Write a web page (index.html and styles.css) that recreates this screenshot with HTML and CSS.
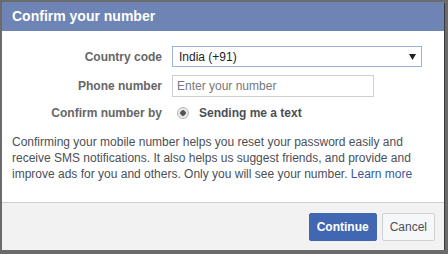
FILE: index.html
```html
<!DOCTYPE html>
<html lang="en">
<head>
  <meta charset="UTF-8" />
  <title>Confirm your number</title>
  <link rel="stylesheet" href="styles.css">
</head>
<body>
  <div class="dialog">
    <div class="dialog-header">Confirm your number</div>

    <div class="dialog-body">
      <div class="form-grid">
        <label for="country">Country code</label>
        <div class="select-wrap">
          <select id="country">
            <option>India (+91)</option>
          </select>
          <svg class="select-arrow" width="7" height="6" viewBox="0 0 7 6"><path d="M0 0 H7 L3.5 6 Z" fill="#1d2129"/></svg>
        </div>

        <label for="phone">Phone number</label>
        <input type="text" id="phone" placeholder="Enter your number">

        <label>Confirm number by</label>
        <div class="radio-row">
          <input type="radio" name="confirm" checked>
          <span>Sending me a text</span>
        </div>
      </div>

      <p class="info">Confirming your mobile number helps you reset your password easily and receive SMS notifications. It also helps us suggest friends, and provide and improve ads for you and others. Only you will see your number. <a href="#">Learn more</a></p>
    </div>

    <div class="dialog-footer">
      <button class="btn btn-primary">Continue</button>
      <button class="btn">Cancel</button>
    </div>
  </div>
</body>
</html>
```

FILE: styles.css
```css
body {
  margin: 0;
  background: #6b6b6b;
  font-family: 'Liberation Sans', Arial, sans-serif;
  font-size: 12px;
  color: #4b4f56;
}

.dialog {
  margin: 2px 3px 0 2px;
  width: 442px;
  height: 248px;
  background: #fff;
  display: flex;
  flex-direction: column;
  box-shadow: 1px 1px 0 #3a3a3a;
}

.dialog-header {
  background: #6d84b4;
  color: #fff;
  font-size: 14px;
  font-weight: bold;
  height: 29px;
  line-height: 29px;
  padding-left: 10px;
}

.dialog-body {
  flex: 1;
  padding: 15px 10px 0 10px;
}

.form-grid {
  display: grid;
  grid-template-columns: 150px auto;
  column-gap: 10px;
  row-gap: 8px;
  align-items: center;
  justify-items: start;
}

.form-grid label {
  justify-self: end;
  font-weight: bold;
  color: #666;
}

.select-wrap {
  position: relative;
}

select {
  appearance: none;
  -webkit-appearance: none;
  width: 250px;
  height: 21px;
  border: 1px solid #9cb4d8;
  border-radius: 0;
  background: #fff;
  font-family: inherit;
  font-size: 12px;
  color: #1d2129;
  padding: 0 0 0 6px;
  outline: none;
}

.select-arrow {
  position: absolute;
  right: 6px;
  top: 8px;
}

input[type=text] {
  width: 202px;
  height: 22px;
  box-sizing: border-box;
  border: 1px solid #ccd0d5;
  font-family: inherit;
  font-size: 12px;
  padding: 0 4px;
  margin: 0;
  outline: none;
}

input[type=text]::placeholder {
  color: #75787d;
}

.radio-row {
  display: flex;
  align-items: center;
  gap: 10px;
  height: 16px;
  padding-left: 5px;
}

.radio-row span {
  font-weight: bold;
  color: #4b4f56;
}

input[type=radio] {
  appearance: none;
  -webkit-appearance: none;
  width: 12px;
  height: 12px;
  margin: 0;
  border: 1px solid #b5b5b5;
  border-radius: 50%;
  background: radial-gradient(circle, #555 0, #555 2.5px, #e4e4e4 3px, #f4f4f4 100%);
}

.info {
  margin: 13px 0 0 0;
  line-height: 16px;
  color: #4b4f56;
}

.info a {
  color: #365899;
  text-decoration: none;
}

.dialog-footer {
  background: #f2f2f2;
  border-top: 1px solid #ccc;
  height: 47px;
  display: flex;
  justify-content: flex-end;
  align-items: center;
  gap: 5px;
  padding-right: 9px;
}

.btn {
  height: 28px;
  padding: 0 7px;
  border: 1px solid #ced0d4;
  border-radius: 2px;
  background: #f6f7f9;
  color: #4b4f56;
  font-family: inherit;
  font-size: 12px;
}

.btn-primary {
  background: #4267b2;
  border-color: #4267b2;
  color: #fff;
  font-weight: bold;
}
```
